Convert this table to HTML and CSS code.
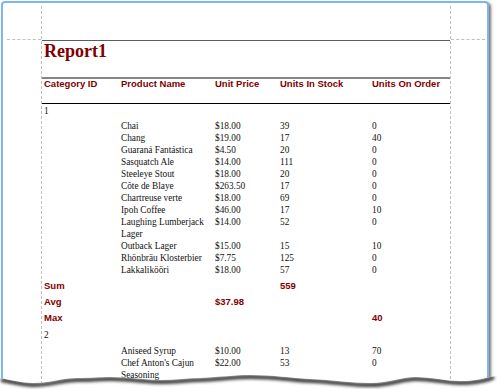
FILE: index.html
```html
<!DOCTYPE html>
<html lang="en">
	<head>
		<meta charset="UTF-8" />
		<meta name="viewport" content="width=device-width, initial-scale=1.0" />
		<title>Report1 - Print Preview</title>
		<link rel="stylesheet" href="styles.css">
	</head>
	<body>
		<div class="paper">
			<div class="gutter gutter-left"><div class="guide-corner"></div></div>

			<div class="page">
				<div class="report-title">Report1</div>

				<div class="row col-heads">
					<span>Category ID</span>
					<span>Product Name</span>
					<span>Unit Price</span>
					<span>Units In Stock</span>
					<span>Units On Order</span>
				</div>

				<div class="group">
					<div class="group-head">1</div>
					<div class="row detail"><span></span><span>Chai</span><span>$18.00</span><span>39</span><span>0</span></div>
					<div class="row detail"><span></span><span>Chang</span><span>$19.00</span><span>17</span><span>40</span></div>
					<div class="row detail"><span></span><span>Guaraná Fantástica</span><span>$4.50</span><span>20</span><span>0</span></div>
					<div class="row detail"><span></span><span>Sasquatch Ale</span><span>$14.00</span><span>111</span><span>0</span></div>
					<div class="row detail"><span></span><span>Steeleye Stout</span><span>$18.00</span><span>20</span><span>0</span></div>
					<div class="row detail"><span></span><span>Côte de Blaye</span><span>$263.50</span><span>17</span><span>0</span></div>
					<div class="row detail"><span></span><span>Chartreuse verte</span><span>$18.00</span><span>69</span><span>0</span></div>
					<div class="row detail"><span></span><span>Ipoh Coffee</span><span>$46.00</span><span>17</span><span>10</span></div>
					<div class="row detail"><span></span><span>Laughing Lumberjack Lager</span><span>$14.00</span><span>52</span><span>0</span></div>
					<div class="row detail"><span></span><span>Outback Lager</span><span>$15.00</span><span>15</span><span>10</span></div>
					<div class="row detail"><span></span><span>Rhönbräu Klosterbier</span><span>$7.75</span><span>125</span><span>0</span></div>
					<div class="row detail"><span></span><span>Lakkalikööri</span><span>$18.00</span><span>57</span><span>0</span></div>
					<div class="row total"><span>Sum</span><span></span><span></span><span>559</span><span></span></div>
					<div class="row total"><span>Avg</span><span></span><span>$37.98</span><span></span><span></span></div>
					<div class="row total"><span>Max</span><span></span><span></span><span></span><span>40</span></div>
				</div>

				<div class="group">
					<div class="group-head">2</div>
					<div class="row detail"><span></span><span>Aniseed Syrup</span><span>$10.00</span><span>13</span><span>70</span></div>
					<div class="row detail"><span></span><span>Chef Anton's Cajun Seasoning</span><span>$22.00</span><span>53</span><span>0</span></div>
				</div>
			</div>

			<div class="gutter gutter-right"><div class="guide-corner"></div></div>
		</div>

		<!-- torn bottom edge of the preview page -->
		<svg class="torn-edge" width="497" height="29" viewBox="0 0 497 29">
			<defs>
				<clipPath id="outside">
					<path d="M0,18 C12,20 22,23 33,23 C50,23 62,18 77,18 C90,18 100,17 110,17 C130,17 145,20 160,20 C175,20 188,18 200,18 C220,17 235,15 250,15 C275,15 290,18 310,19 C335,20 350,23 370,23 C390,23 400,17 415,17 C432,17 445,21 460,21 C474,21 482,19 489,17 L497,16 L497,29 L0,29 Z" />
				</clipPath>
				<filter id="soft" x="-5%" y="-50%" width="110%" height="200%">
					<feGaussianBlur stdDeviation="1.4" />
				</filter>
			</defs>
			<rect x="0" y="0" width="497" height="29" fill="#fff" clip-path="url(#outside)" />
			<g clip-path="url(#outside)">
				<path d="M0,18 C12,20 22,23 33,23 C50,23 62,18 77,18 C90,18 100,17 110,17 C130,17 145,20 160,20 C175,20 188,18 200,18 C220,17 235,15 250,15 C275,15 290,18 310,19 C335,20 350,23 370,23 C390,23 400,17 415,17 C432,17 445,21 460,21 C474,21 482,19 489,17 L493,15" transform="translate(1,2)" fill="none" stroke="#3a3a3a" stroke-width="4" filter="url(#soft)" />
			</g>
		</svg>
	</body>
</html>
```

FILE: styles.css
```css
body {
	margin: 0;
	height: 389px;
	overflow: hidden;
	position: relative;
	background-color: #fff;
	font-family: "Liberation Serif", "Times New Roman", serif;
	color: #111;
}
.paper {
	display: grid;
	grid-template-columns: 39px 408px 37px;
	width: 484px;
	height: 386px;
	margin: 1px 0 0 1px;
	border: 2px solid #7fb6ee;
	border-bottom: none;
	border-radius: 4px 4px 0 0;
	background-color: #fff;
	box-shadow: 2px 2px 3px rgba(0, 0, 0, 0.55);
	overflow: hidden;
}
.gutter {
	margin-top: 3px;
}
.gutter-left {
	border-right: 1px dashed #bfbfbf;
}
.gutter-right {
	border-left: 1px dashed #bfbfbf;
}
.guide-corner {
	height: 33px;
	border-bottom: 1px dashed #bfbfbf;
}
.gutter-left .guide-corner {
	margin-left: 4px;
}
.gutter-right .guide-corner {
	margin-right: 2px;
}
.page {
	padding-top: 37px;
}
.report-title {
	height: 36px;
	padding-left: 2px;
	border-top: 1px solid #5c5c5c;
	border-bottom: 2px solid #868686;
	font-weight: bold;
	font-size: 18px;
	line-height: 20px;
	color: #800000;
}
.row {
	display: grid;
	grid-template-columns: 77px 94px 65px 92px 1fr;
	padding-left: 2px;
}
.col-heads {
	height: 24px;
	border-bottom: 1px solid #000;
	font-family: "Liberation Sans", Arial, sans-serif;
	font-weight: bold;
	font-size: 9.5px;
	line-height: 10px;
	color: #800000;
}
.group-head {
	height: 16px;
	padding-left: 2px;
	font-size: 9.3px;
	line-height: 14px;
}
.group + .group .group-head {
	height: 17px;
}
.detail {
	font-size: 9.3px;
	line-height: 12px;
}
.total {
	box-sizing: border-box;
	height: 16px;
	padding-top: 4px;
	font-family: "Liberation Sans", Arial, sans-serif;
	font-weight: bold;
	font-size: 9.5px;
	line-height: 12px;
	color: #800000;
}
.total:last-child {
	margin-bottom: 4px;
}
.torn-edge {
	position: absolute;
	left: 0;
	top: 360px;
}
```
